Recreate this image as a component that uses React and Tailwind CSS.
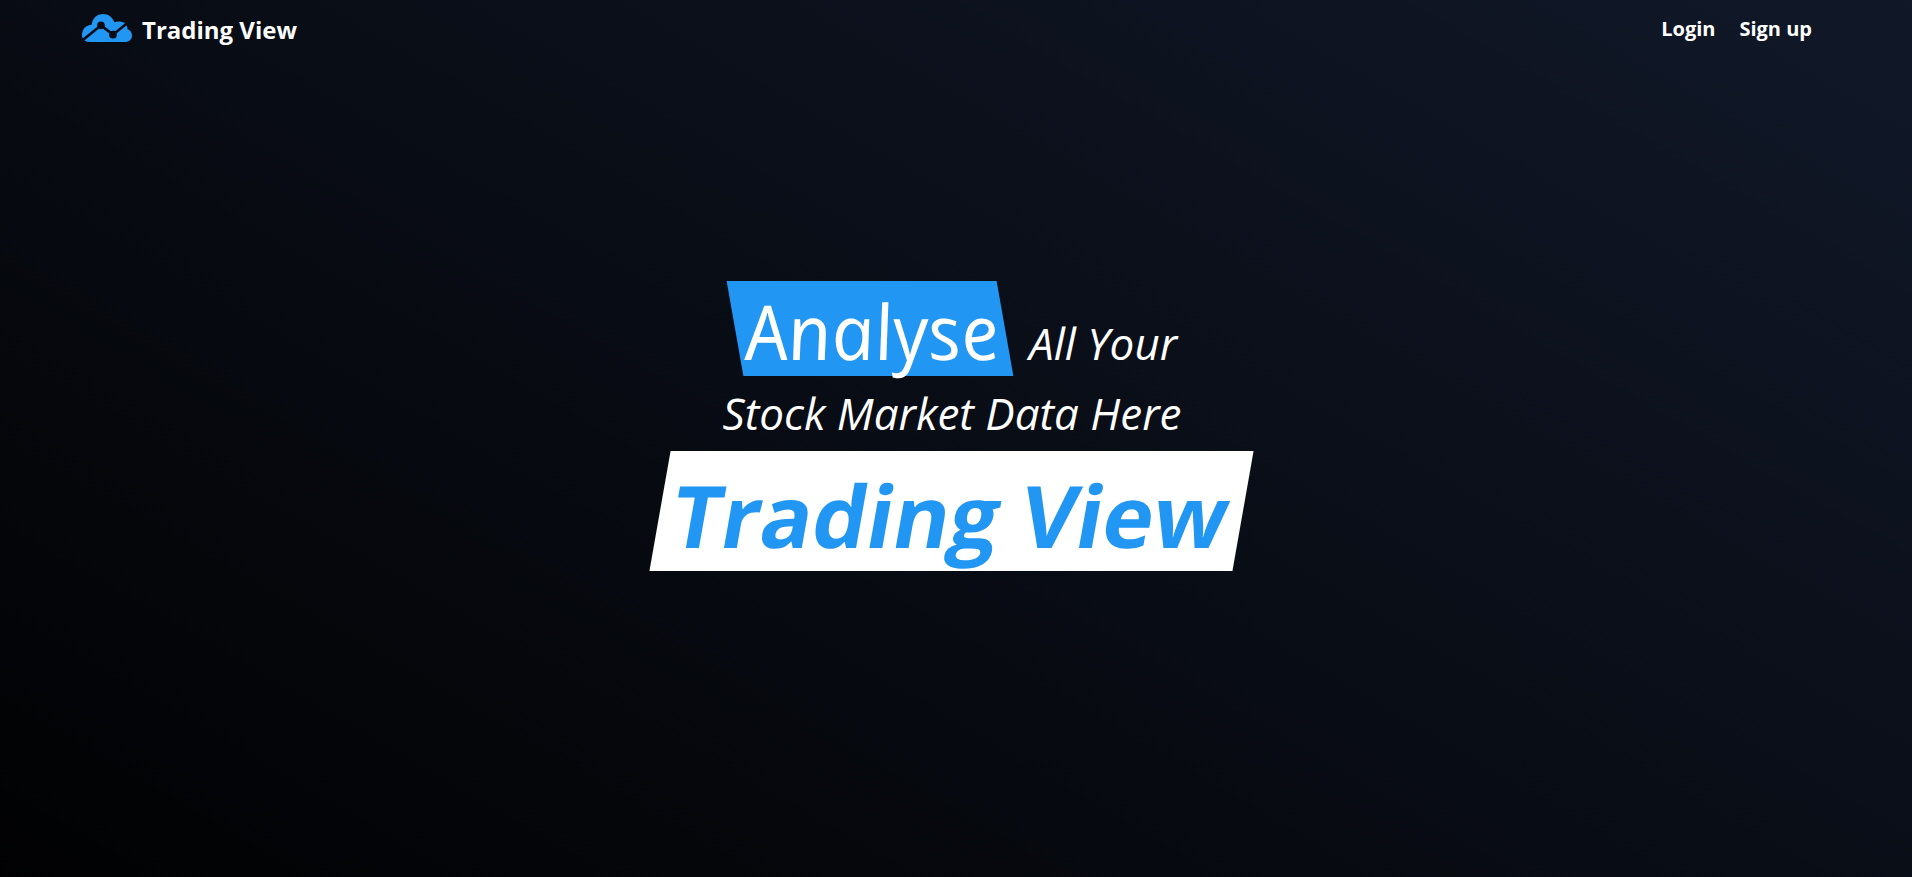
function CloudChartIcon() {
  return (
    <svg viewBox="0 0 150 84" className="h-7 w-[50px]" aria-hidden="true">
      <defs>
        <mask id="chart-cut">
          <rect width="150" height="84" fill="white" />
          <path d="M0 80 L57 34 L93 62 L136 27" fill="none" stroke="black" strokeWidth="8" />
          <circle cx="57" cy="34" r="11.5" fill="black" />
          <circle cx="93" cy="62" r="11.5" fill="black" />
        </mask>
      </defs>
      <path
        d="M22 84 C9 84 0 76 0 64 C0 45 12 33 29 32 C31 14 44 0 63 0 C79 0 92 10 97 25 C105 22 118 22 127 26 C133 32 136 38 137 46 C145 49 150 56 150 65 C150 76 141 84 129 84 Z"
        fill="#2196f3"
        mask="url(#chart-cut)"
      />
    </svg>
  );
}

export default function App() {
  return (
    <div className="flex min-h-screen flex-col bg-linear-30/srgb from-black from-[-6%] to-gray-900 font-['Open_Sans','Noto_Sans',sans-serif] text-white">
      <header className="flex items-center justify-between pt-2.5 pr-[100px] pl-[82px]">
        <a href="#home" className="flex items-center gap-2.5 text-2xl font-bold">
          <CloudChartIcon />
          <span className="pt-1">Trading View</span>
        </a>
        <nav className="flex items-center gap-6 pt-0.5 text-xl font-bold">
          <a href="#login">Login</a>
          <a href="#signup">Sign up</a>
        </nav>
      </header>
      <main className="flex flex-1 flex-col items-center pt-[235px] pr-2">
        <h1 className="flex flex-col items-center font-normal">
          <span className="flex items-baseline gap-6 pl-2 text-[44px] italic">
            <span className="skew-x-10 bg-[#2196f3] px-2 pt-1 text-[76px] leading-[91px]">Analyse</span>
            All Your
          </span>
          <span className="text-[44px] leading-[75px] italic">Stock Market Data Here</span>
          <span className="-skew-x-10 bg-white px-3.5 pt-2 text-[86px] leading-[112px] font-bold text-[#2196f3]">
            Trading View
          </span>
        </h1>
      </main>
    </div>
  );
}
